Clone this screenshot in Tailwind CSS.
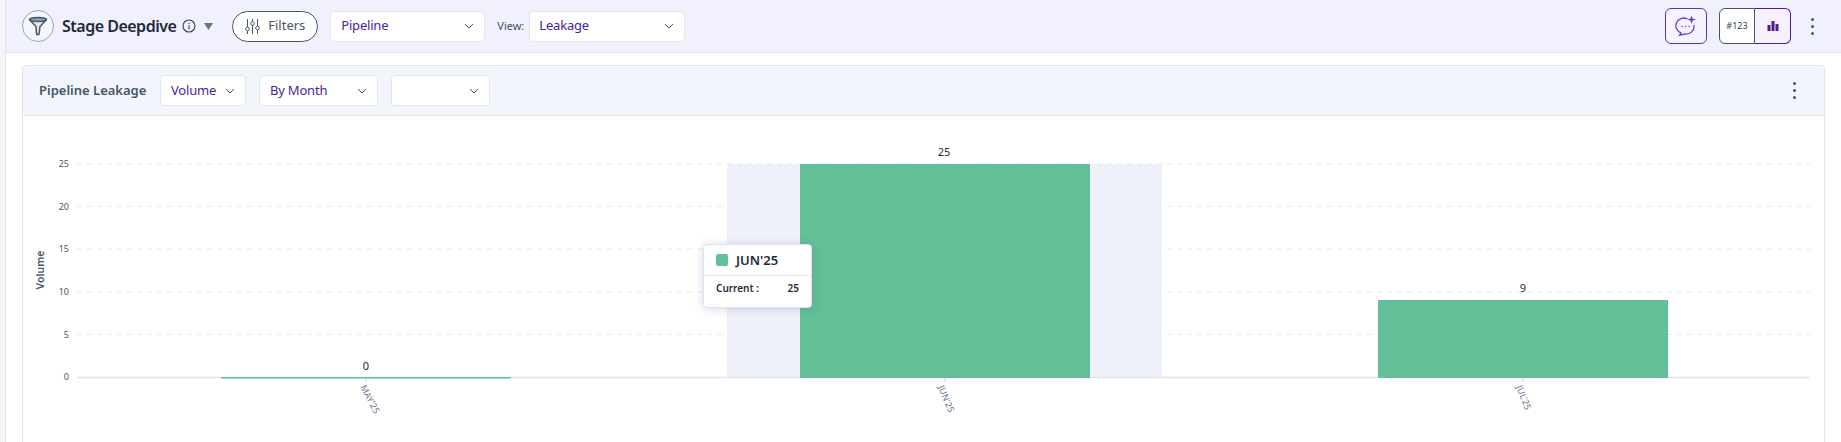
<!DOCTYPE html>
<html lang="en">
<head>
  <meta charset="UTF-8" />
  <title>Stage Deepdive</title>
  <script src="https://cdn.jsdelivr.net/npm/@tailwindcss/browser@4"></script>
</head>
<body class="bg-white h-[442px] overflow-hidden flex font-['Noto_Sans',sans-serif] text-slate-700">

  <!-- side strip -->
  <div class="w-[6px] shrink-0 bg-[#f4f5f9] border-r border-[#e3e5ec]"></div>

  <div class="flex-1 min-w-0 flex flex-col">
    <!-- page header -->
    <div class="h-[53px] shrink-0 bg-[#f0f1fc] border-b border-[#e2e4ef] flex items-center pl-[16px] pr-[27px]">
      <div class="w-[32px] h-[32px] rounded-full border border-[#9aa6b5] bg-[#f5f6fc] flex items-center justify-center">
        <svg class="w-[22px] h-[22px]" viewBox="0 0 22 22" fill="none" stroke="#475569" stroke-width="1.5" stroke-linejoin="round">
          <path d="M2.5 4.5 L9 11.5 L9.6 19.5 L12 19.5 L13 11.5 L19.5 4.5" fill="#e2e8f0" />
          <ellipse cx="11" cy="4.5" rx="8.5" ry="2" fill="#94a3b8" />
        </svg>
      </div>
      <div class="ml-[8px] text-[16px] leading-none font-semibold text-[#1e293b] tracking-[-0.5px]">Stage Deepdive</div>
      <svg class="ml-[6px] w-[14px] h-[14px]" viewBox="0 0 14 14" fill="none" stroke="#334155" stroke-width="1.1">
        <circle cx="7" cy="7" r="6" />
        <path d="M7 6.2 V10.2 M7 3.8 V5" />
      </svg>
      <svg class="ml-[8px] w-[9px] h-[7px]" viewBox="0 0 9 7"><path d="M0 0 H9 L4.5 7 Z" fill="#64748b" /></svg>
      <div class="ml-[19px] w-[86px] h-[31px] rounded-full border border-[#475569] bg-white flex items-center justify-center gap-[8px] text-[13px] text-[#475569]">
        <svg class="w-[15px] h-[17px]" viewBox="0 0 15 17" fill="none" stroke="#475569" stroke-width="1">
          <path d="M2.5 1 V9 M2.5 13 V16 M7.5 1 V3.5 M7.5 7.5 V16 M12.5 1 V8 M12.5 12 V16" />
          <circle cx="2.5" cy="11" r="1.8" /><circle cx="7.5" cy="5.5" r="1.8" /><circle cx="12.5" cy="10" r="1.8" />
        </svg>
        Filters
      </div>
      <div class="ml-[12px] w-[155px] h-[31px] rounded-[4px] border border-[#e4e6ef] bg-white flex items-center justify-between pl-[10px] pr-[10px] text-[13px] tracking-[-0.2px] text-[#4c1d95]">
        Pipeline
        <svg class="w-[10px] h-[6px]" viewBox="0 0 10 6" fill="none" stroke="#475569"><path d="M1 1 L5 5 L9 1" /></svg>
      </div>
      <div class="ml-[12px] text-[11px] text-[#475569]">View:</div>
      <div class="ml-[5px] w-[156px] h-[31px] rounded-[4px] border border-[#e4e6ef] bg-white flex items-center justify-between pl-[9px] pr-[10px] text-[13px] tracking-[-0.2px] text-[#4c1d95]">
        Leakage
        <svg class="w-[10px] h-[6px]" viewBox="0 0 10 6" fill="none" stroke="#475569"><path d="M1 1 L5 5 L9 1" /></svg>
      </div>

      <div class="ml-auto w-[42px] h-[36px] rounded-[6px] border border-[#5b34b5] bg-[#f5f3ff] flex items-center justify-center">
        <svg class="w-[22px] h-[22px]" viewBox="0 0 22 22" fill="none" stroke="#6d3fd0" stroke-width="1.3" stroke-linecap="round">
          <path d="M12 3.6 A8 7.6 0 1 0 6 17.8 L4.6 20.2 L10 19 A8 7.6 0 0 0 19 10.5" />
          <path d="M16.5 0.5 L17.6 3.6 L20.8 4.6 L17.6 5.8 L16.5 8.8 L15.4 5.8 L12.4 4.6 L15.4 3.6 Z" fill="#6d3fd0" stroke="none" />
          <path d="M7 11.5 H7.2 M10.5 11.5 H10.7 M14 11.5 H14.2" />
        </svg>
      </div>
      <div class="ml-[12px] w-[72px] h-[36px] flex text-[9px]">
        <div class="w-[36px] rounded-l-[6px] border border-[#475569] bg-white flex items-center justify-center text-[#334155]">#123</div>
        <div class="w-[36px] rounded-r-[6px] border border-l-0 border-[#4c1d95] bg-[#f7f1fd] flex items-center justify-center">
          <svg class="w-[12px] h-[12px]" viewBox="0 0 12 12" fill="#4c1d95"><rect x="0.5" y="5" width="3" height="6" /><rect x="4.5" y="1" width="3" height="10" /><rect x="8.5" y="4" width="3" height="7" /></svg>
        </div>
      </div>
      <div class="ml-[20px] flex flex-col gap-[4px]">
        <div class="w-[3px] h-[3px] rounded-full bg-[#475569]"></div>
        <div class="w-[3px] h-[3px] rounded-full bg-[#475569]"></div>
        <div class="w-[3px] h-[3px] rounded-full bg-[#475569]"></div>
      </div>
    </div>

    <!-- card -->
    <div class="mt-[12px] ml-[16px] w-[1803px] flex-1 border border-b-0 border-[#e2e4ea] rounded-t-[4px] flex flex-col min-h-0">
      <div class="h-[50px] shrink-0 bg-[#f2f5fb] border-b border-[#e2e4ea] flex items-center pl-[16px] pr-[28px]">
        <div class="w-[107px] text-[13px] font-semibold text-[#475569] whitespace-nowrap">Pipeline Leakage</div>
        <div class="ml-[14px] w-[86px] h-[31px] rounded-[4px] border border-[#e4e6ef] bg-white flex items-center justify-between pl-[10px] pr-[10px] text-[13px] tracking-[-0.2px] text-[#4c1d95]">
          Volume
          <svg class="w-[10px] h-[6px]" viewBox="0 0 10 6" fill="none" stroke="#475569"><path d="M1 1 L5 5 L9 1" /></svg>
        </div>
        <div class="ml-[13px] w-[119px] h-[31px] rounded-[4px] border border-[#e4e6ef] bg-white flex items-center justify-between pl-[10px] pr-[10px] text-[13px] tracking-[-0.2px] text-[#4c1d95]">
          By Month
          <svg class="w-[10px] h-[6px]" viewBox="0 0 10 6" fill="none" stroke="#475569"><path d="M1 1 L5 5 L9 1" /></svg>
        </div>
        <div class="ml-[13px] w-[99px] h-[31px] rounded-[4px] border border-[#e4e6ef] bg-white flex items-center justify-end pr-[10px]">
          <svg class="w-[10px] h-[6px]" viewBox="0 0 10 6" fill="none" stroke="#475569"><path d="M1 1 L5 5 L9 1" /></svg>
        </div>
        <div class="ml-auto flex flex-col gap-[4px]">
          <div class="w-[3px] h-[3px] rounded-full bg-[#475569]"></div>
          <div class="w-[3px] h-[3px] rounded-full bg-[#475569]"></div>
          <div class="w-[3px] h-[3px] rounded-full bg-[#475569]"></div>
        </div>
      </div>

      <!-- chart -->
      <div class="relative flex-1 min-h-0">
        <svg class="block" width="1801" height="326" viewBox="23 116 1801 326" font-family="Noto Sans, sans-serif">
          <rect x="727" y="164" width="435" height="213" fill="#eef1fa" />
          <g stroke="#e8eaee" stroke-dasharray="5 5">
            <path d="M77 164 H1810 M77 206.5 H1810 M77 249 H1810 M77 292 H1810 M77 334.5 H1810" />
          </g>
          <path d="M77 377.5 H1810" stroke="#dfe2e7" stroke-width="1.5" />
          <path d="M366 378 V382 M945 378 V382 M1523 378 V382" stroke="#cfd3da" />
          <rect x="221" y="377" width="290" height="1.5" fill="#62bf97" />
          <rect x="800" y="164" width="290" height="214" fill="#62bf97" />
          <rect x="1378" y="300" width="290" height="78" fill="#62bf97" />
          <g font-size="9" fill="#475569" text-anchor="end">
            <text x="69" y="167">25</text>
            <text x="69" y="209.5">20</text>
            <text x="69" y="252">15</text>
            <text x="69" y="295">10</text>
            <text x="69" y="337.5">5</text>
            <text x="69" y="380">0</text>
          </g>
          <text transform="translate(44 270) rotate(-90)" font-size="10.5" font-weight="600" fill="#475569" text-anchor="middle">Volume</text>
          <g font-size="11" fill="#1e293b" text-anchor="middle">
            <text x="366" y="370">0</text>
            <text x="944" y="156">25</text>
            <text x="1523" y="292">9</text>
          </g>
          <g font-size="9" fill="#64748b">
            <text transform="translate(360 387) rotate(62)">MAY'25</text>
            <text transform="translate(938 387) rotate(68)">JUN'25</text>
            <text transform="translate(1516 387) rotate(68)">JUL'25</text>
          </g>
        </svg>

        <!-- tooltip -->
        <div class="absolute left-[680px] top-[128px] w-[109px] h-[64px] bg-white border border-[#e0e1ee] rounded-[4px] shadow-[0_1px_8px_rgba(90,90,150,0.25)] text-[#1e293b]">
          <div class="h-[31px] border-b border-[#e5e7eb] flex items-center pl-[12px] gap-[8px]">
            <div class="w-[12px] h-[12px] rounded-[2px] bg-[#62bf97]"></div>
            <div class="text-[13px] font-semibold leading-none">JUN'25</div>
          </div>
          <div class="flex justify-between px-[12px] pt-[5px] text-[10px] font-semibold leading-[14px]">
            <span>Current :</span><span>25</span>
          </div>
        </div>
      </div>
    </div>
  </div>
</body>
</html>
